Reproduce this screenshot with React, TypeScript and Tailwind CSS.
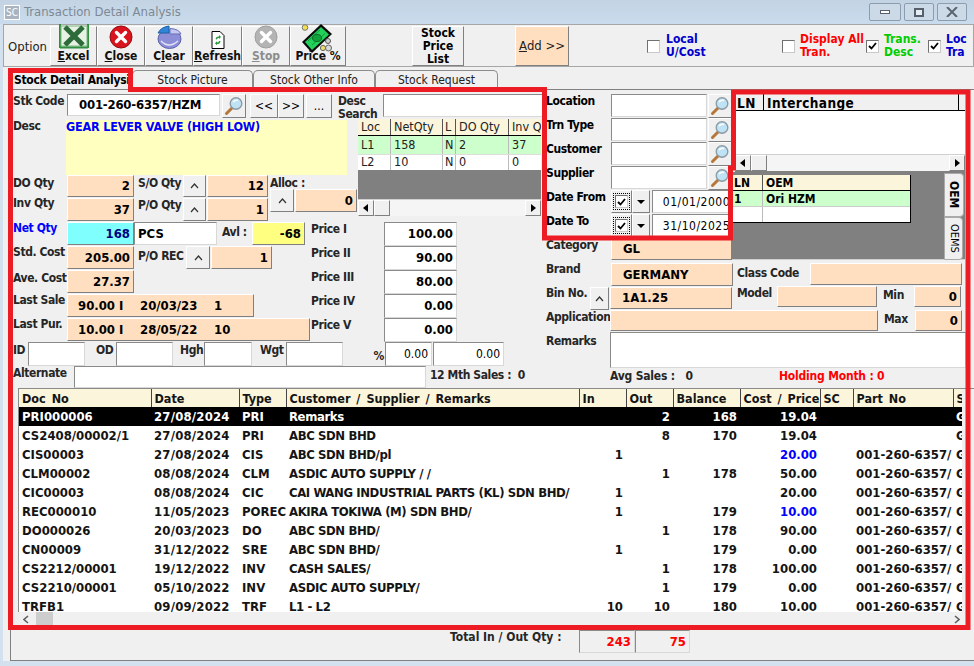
import type { ReactNode } from "react";

const raised = "border border-t-white border-l-white border-r-[#808080] border-b-[#808080]";
const sunken = "border border-t-[#8a8a8a] border-l-[#8a8a8a] border-r-[#d8d8d8] border-b-[#d8d8d8]";
const peach = "bg-[#ffdfc0]";

function SearchBtn() {
  return (
    <div className={`${raised} bg-[#f0f0f0] w-[24px] h-[24px] shrink-0 flex items-center justify-center`}>
      <svg width="20" height="20" viewBox="0 0 20 20">
        <path d="M8 12 L2.5 17.5" stroke="#b5763a" strokeWidth="3" strokeLinecap="round" />
        <circle cx="12" cy="7.5" r="5.8" fill="#bfe3f5" stroke="#8d9aa3" strokeWidth="1.4" />
        <path d="M9 6 Q11 3.6 14 4.4" stroke="#fff" strokeWidth="1.4" fill="none" />
      </svg>
    </div>
  );
}

function Caret({ className }: { className: string }) {
  return (
    <div className={`${raised} bg-[#f0f0f0] flex items-center justify-center text-[12px] ${className}`}>
      <svg width="9" height="6" viewBox="0 0 9 6"><path d="M1 5 L4.5 1 L8 5" fill="none" stroke="#333" strokeWidth="1.2" /></svg>
    </div>
  );
}

function Box({ className, children, right, sink }: { className: string; children?: ReactNode; right?: boolean; sink?: boolean }) {
  return (
    <div className={`${sink ? sunken : raised} shrink-0 flex items-center font-bold text-[13px] whitespace-nowrap overflow-hidden ${right ? "justify-end pr-[3px]" : "pl-[3px]"} ${className}`}>
      {children}
    </div>
  );
}

function Label({ className, children }: { className: string; children: ReactNode }) {
  return <div className={`shrink-0 font-bold text-[12px] leading-[14px] tracking-[-0.4px] text-[#262626] whitespace-nowrap ${className}`}>{children}</div>;
}

function Hbar({ className }: { className?: string }) {
  return (
    <div className={`h-[17px] flex bg-[#f5f5f5] border-t border-[#d0d0d0] ${className ?? ""}`}>
      <div className={`${raised} bg-[#f0f0f0] w-[16px] flex items-center justify-center`}>
        <svg width="6" height="8" viewBox="0 0 6 8"><path d="M5 0 L0 4 L5 8 Z" fill="#000" /></svg>
      </div>
      <div className={`${raised} bg-[#f0f0f0] w-[16px]`} />
      <div className="flex-1" />
      <div className={`${raised} bg-[#f0f0f0] w-[16px] flex items-center justify-center`}>
        <svg width="6" height="8" viewBox="0 0 6 8"><path d="M1 0 L6 4 L1 8 Z" fill="#000" /></svg>
      </div>
    </div>
  );
}

function ExcelIcon() {
  return (
    <svg width="30" height="25" viewBox="0 0 30 25">
      <path d="M1 0 V24 M29 0 V24" stroke="#2f8f3f" strokeWidth="2" />
      <rect x="2" y="2" width="26" height="20" fill="#e8f2e4" stroke="#7ab880" strokeWidth="1" />
      <path d="M6 3 L24 21 M24 3 L6 21" stroke="#2d6b3a" strokeWidth="5" />
      <path d="M1 23.5 H29" stroke="#2f8f3f" strokeWidth="2" />
    </svg>
  );
}

function CloseIcon({ stop }: { stop?: boolean }) {
  return (
    <svg width="24" height="24" viewBox="0 0 24 24">
      <circle cx="12" cy="12" r="11" fill={stop ? "#b4b4b4" : "#d9141c"} stroke={stop ? "#a0a0a0" : "#8f1015"} />
      <path d="M7.5 7.5 L16.5 16.5 M16.5 7.5 L7.5 16.5" stroke="#fff" strokeWidth="3.4" strokeLinecap="round" />
    </svg>
  );
}

function ClearIcon() {
  return (
    <svg width="26" height="24" viewBox="0 0 26 24">
      <ellipse cx="13.5" cy="14" rx="11.5" ry="9.5" fill="#8c8fd8" stroke="#5e62a8" />
      <path d="M2 8 Q5 2 13 1 L13 8 Z" fill="#2f86d8" stroke="#1d5ea6" />
      <path d="M14 9 H25 Q23 4 14 3.5 Z" fill="#c5c8ee" stroke="#6a6db8" />
      <path d="M5 16 Q13 24 22 16" stroke="#e4e4f7" strokeWidth="1.5" fill="none" />
    </svg>
  );
}

function RefreshIcon() {
  return (
    <svg width="14" height="18" viewBox="0 0 14 18">
      <path d="M1 .5 H9 L13 4.5 V17.5 H1 Z" fill="#fff" stroke="#000" />
      <path d="M4.5 8 Q5 5 8 5.5 L8 4 L10 6 L8 8 L8 6.8 Q6 6.8 6 8.5 Z" fill="#1f9a35" />
      <path d="M9.5 10 Q9 13.5 6 12.8 L6 14.3 L4 12.3 L6 10.3 L6 11.5 Q8 11.5 8 10 Z" fill="#1f9a35" />
    </svg>
  );
}

function PriceIcon() {
  return (
    <svg width="34" height="30" viewBox="0 0 34 30" className="-mb-[5px]">
      <circle cx="4" cy="3.5" r="2.8" fill="#f0e050" stroke="#777" />
      <path d="M1 18 L20 0 L31 10 L11 29 Z" fill="#0a0a0a" />
      <path d="M4 18 L20 3 L28 10.5 L11 26 Z" fill="#22d05a" />
      <path d="M7 17 L19 6 M11 21 L24 9.5" stroke="#0f9a3a" strokeWidth="1" />
      <ellipse cx="16" cy="14" rx="4.5" ry="3.5" fill="#12a03c" stroke="#0c6e2a" />
      <circle cx="27" cy="17" r="2.5" fill="#d0d0d0" stroke="#555" />
      <circle cx="22" cy="24" r="2.6" fill="#e8e070" stroke="#666" />
      <circle cx="27.5" cy="24" r="3" fill="#d8d8d8" stroke="#666" />
    </svg>
  );
}

function ToolBtn({ width, icon, label, gray }: { width: string; icon: ReactNode; label: ReactNode; gray?: boolean }) {
  return (
    <div className={`${raised} ${width} h-[40px] shrink-0 flex flex-col items-center justify-end pb-[2px] relative`}>
      <div className="h-[24px] flex items-end justify-center mb-[1px]">{icon}</div>
      <div className={`relative font-bold text-[12px] leading-[13px] ${gray ? "text-[#8c8c8c]" : "text-[#111]"}`}>{label}</div>
    </div>
  );
}

function CheckBox({ on }: { on?: boolean }) {
  return (
    <div className="w-[13px] h-[13px] shrink-0 bg-white border border-t-[#707070] border-l-[#707070] border-r-[#c8c8c8] border-b-[#c8c8c8] flex items-center justify-center">
      {on && <svg width="9" height="8" viewBox="0 0 9 8"><path d="M1 4 L3.5 6.5 L8 1" fill="none" stroke="#000" strokeWidth="1.8" /></svg>}
    </div>
  );
}

function Tab({ label, width }: { label: string; width: string }) {
  return (
    <div className={`${width} h-[19px] border border-b-0 border-[#8c8c8c] rounded-t-[5px] bg-[#f0f0f0] flex items-center justify-center text-[12px] text-[#222]`}>
      {label}
    </div>
  );
}

function DateRow({ label, value }: { label: string; value: string }) {
  return (
    <div className="flex h-[24px] items-start">
      <Label className="w-[65px] !text-black">{label}</Label>
      <div className={`${raised} w-[21px] h-[23px] flex items-center justify-center`}>
        <div className="border border-dotted border-black p-[1px]"><CheckBox on /></div>
      </div>
      <div className={`${raised} w-[18px] h-[23px] flex items-center justify-center`}>
        <svg width="8" height="4" viewBox="0 0 8 4"><path d="M0 0 H8 L4 4 Z" fill="#000" /></svg>
      </div>
      <div className={`${sunken} ml-[2px] w-[80px] h-[23px] bg-white flex items-center justify-end pr-[1px] text-[12px] tracking-[.5px]`}>{value}</div>
    </div>
  );
}

const columns = [
  { name: "Doc No", w: "w-[132px]" },
  { name: "Date", w: "w-[88px]" },
  { name: "Type", w: "w-[47px]" },
  { name: "Customer / Supplier / Remarks", w: "w-[293px]" },
  { name: "In", w: "w-[47px]" },
  { name: "Out", w: "w-[47px]" },
  { name: "Balance", w: "w-[67px]" },
  { name: "Cost / Price", w: "w-[80px]" },
  { name: "SC", w: "w-[33px]" },
  { name: "Part No", w: "w-[100px]" },
  { name: "S", w: "w-[60px]" },
];

const PN = "001-260-6357/";
const rows = [
  ["PRI000006", "27/08/2024", "PRI", "Remarks", "", "2", "168", "19.04", "", "", "G"],
  ["CS2408/00002/1", "27/08/2024", "PRI", "ABC SDN BHD", "", "8", "170", "19.04", "", "", "G"],
  ["CIS00003", "27/08/2024", "CIS", "ABC SDN BHD/pl", "1", "", "", "20.00", "", PN, "G"],
  ["CLM00002", "08/08/2024", "CLM", "ASDIC AUTO SUPPLY / /", "", "1", "178", "50.00", "", PN, "G"],
  ["CIC00003", "08/08/2024", "CIC", "CAI WANG INDUSTRIAL PARTS (KL) SDN BHD/", "1", "", "", "20.00", "", PN, "G"],
  ["REC000010", "11/05/2023", "POREC", "AKIRA TOKIWA (M) SDN BHD/", "1", "", "179", "10.00", "", PN, "G"],
  ["DO000026", "20/03/2023", "DO", "ABC SDN BHD/", "", "1", "178", "90.00", "", PN, "G"],
  ["CN00009", "31/12/2022", "SRE", "ABC SDN BHD/", "1", "", "179", "0.00", "", PN, "G"],
  ["CS2212/00001", "19/12/2022", "INV", "CASH SALES/", "", "1", "178", "100.00", "", PN, "G"],
  ["CS2210/00001", "05/10/2022", "INV", "ASDIC AUTO SUPPLY/", "", "1", "179", "0.00", "", PN, "G"],
  ["TRFB1", "09/09/2022", "TRF", "L1 - L2", "10", "10", "180", "10.00", "", PN, "G"],
];

const prices = [
  ["Price I", "100.00"],
  ["Price II", "90.00"],
  ["Price III", "80.00"],
  ["Price IV", "0.00"],
  ["Price V", "0.00"],
];

export default function App() {
  return (
    <div className="relative w-[974px] h-[666px] overflow-hidden bg-[#d3e1ef] text-[12px] text-black font-['DejaVu_Sans_Condensed','DejaVu_Sans',sans-serif]">
      {/* title bar */}
      <div className="h-[24px] flex items-center bg-gradient-to-b from-[#c3d3e3] to-[#c9dced] pl-[4px]">
        <div className="w-[16px] h-[15px] border border-white bg-[#a9b4c0] text-white text-[10px] leading-[13px] text-center">SC</div>
        <div className="ml-[4px] text-[13px] text-[#7e8894]">Transaction Detail Analysis</div>
        <div className="ml-auto mr-[7px] flex gap-[3px]">
          <div className="w-[32px] h-[18px] rounded-[2px] border border-[#8d9db0] bg-[#ccd9e6] flex items-center justify-center">
            <div className="w-[10px] h-[4px] border border-[#55606c] bg-white" />
          </div>
          <div className="w-[30px] h-[18px] rounded-[2px] border border-[#8d9db0] bg-[#ccd9e6] flex items-center justify-center">
            <div className="w-[10px] h-[9px] border-2 border-[#55606c] bg-[#e6edf4]" />
          </div>
          <div className="w-[30px] h-[18px] rounded-[2px] border border-[#8d9db0] bg-[#ccd9e6] flex items-center justify-center">
            <svg width="12" height="10" viewBox="0 0 12 10"><path d="M1 0 L11 10 M11 0 L1 10" stroke="#5a6570" strokeWidth="2" /></svg>
          </div>
        </div>
      </div>

      {/* toolbar */}
      <div className="ml-[3px] h-[43px] bg-[#f0f0f0] border border-[#a6a6a6] flex items-start pt-[1px]">
        <div className="w-[46px] pl-[4px] pt-[11px] text-[13px] text-[#222] shrink-0">Option</div>
        <ToolBtn width="w-[47px]" icon={<ExcelIcon />} label={<><u>E</u>xcel</>} />
        <ToolBtn width="w-[48px]" icon={<CloseIcon />} label={<><u>C</u>lose</>} />
        <ToolBtn width="w-[48px]" icon={<ClearIcon />} label={<>C<u>l</u>ear</>} />
        <ToolBtn width="w-[49px]" icon={<RefreshIcon />} label={<><u>R</u>efresh</>} />
        <ToolBtn width="w-[48px]" icon={<CloseIcon stop />} label={<><u>S</u>top</>} gray />
        <ToolBtn width="w-[56px]" icon={<PriceIcon />} label="Price %" />
        <div className="w-[66px] shrink-0" />
        <div className={`${raised} w-[52px] h-[40px] shrink-0 flex items-center justify-center text-center font-bold text-[12px] leading-[13px]`}>Stock<br />Price<br />List</div>
        <div className="w-[51px] shrink-0" />
        <div className={`${raised} ${peach} w-[54px] h-[40px] shrink-0 flex items-center justify-center text-[13px] text-[#222]`}><u>A</u>dd &gt;&gt;</div>
        <div className="w-[78px] shrink-0" />
        <div className="flex items-center gap-[6px] w-[135px] h-[40px] shrink-0 font-bold text-[#0000cc] leading-[13px]"><CheckBox /><div>Local<br />U/Cost</div></div>
        <div className="flex items-center gap-[5px] w-[84px] h-[40px] shrink-0 font-bold text-[#ff0000] leading-[13px]"><CheckBox /><div>Display All<br />Tran.</div></div>
        <div className="flex items-center gap-[5px] w-[62px] h-[40px] shrink-0 font-bold text-[#00cc00] leading-[13px]"><CheckBox on /><div>Trans.<br />Desc</div></div>
        <div className="flex items-center gap-[5px] h-[40px] shrink-0 font-bold text-[#0000cc] leading-[13px]"><CheckBox on /><div>Loc<br />Tra</div></div>
      </div>

      {/* main area */}
      <div className="ml-[3px] h-[594px] bg-[#f0f0f0] pl-[7px] pb-[5px]">
        <div className="h-[22px] flex items-end pl-[2px]">
          <div className="w-[120px] h-[20px] bg-[#f0f0f0] font-bold text-[12px] tracking-[-0.3px] pl-[2px] leading-[22px] whitespace-nowrap">Stock Detail Analysis</div>
          <Tab label="Stock Picture" width="w-[121px]" />
          <Tab label="Stock Other Info" width="w-[122px]" />
          <Tab label="Stock Request" width="w-[123px]" />
        </div>
        <div className="h-[572px] border-l border-b border-t border-[#808080]">
          <div className="flex">
            {/* left form */}
            <div className="w-[534px] shrink-0 pl-[2px] pt-[4px]">
              <div className="flex h-[25px] items-start">
                <Label className="w-[54px]">Stk Code</Label>
                <Box sink className="w-[153px] h-[22px] bg-white"><span className="pl-[8px] tracking-[-0.2px]">001-260-6357/HZM</span></Box>
                <div className="ml-[2px]"><SearchBtn /></div>
                <div className={`${raised} ml-[4px] w-[28px] h-[24px] flex items-center justify-center text-[12px]`}>&lt;&lt;</div>
                <div className={`${raised} w-[26px] h-[24px] flex items-center justify-center text-[12px]`}>&gt;&gt;</div>
                <div className={`${raised} ml-[2px] w-[26px] h-[24px] flex items-center justify-center text-[12px]`}>...</div>
                <Label className="ml-[6px] w-[45px] pt-[1px] !leading-[13px]">Desc<br />Search</Label>
                <div className={`${sunken} w-[160px] h-[23px] bg-white`} />
              </div>

              <div className="flex h-[103px]">
                <div className="w-[345px] shrink-0">
                  <div className="flex h-[56px] pt-[1px]">
                    <Label className="w-[53px] -mt-[1px]">Desc</Label>
                    <div className="w-[281px] h-[55px] bg-[#ffffc0] font-bold text-[12.5px] tracking-[-0.2px] leading-[14px] text-[#0000ff] whitespace-nowrap">GEAR LEVER VALVE (HIGH LOW)</div>
                  </div>
                  <div className="flex">
                    <div className="w-[255px] shrink-0">
                      <div className="flex h-[23px]">
                        <Label className="w-[54px] pt-[1px]">DO Qty</Label>
                        <Box right className={`w-[67px] h-[22px] ${peach}`}>2</Box>
                        <Label className="ml-[4px] w-[45px] pt-[1px]">S/O Qty</Label>
                        <Caret className="w-[23px] h-[22px]" />
                        <Box right className={`ml-[1px] w-[61px] h-[22px] ${peach}`}>12</Box>
                      </div>
                      <div className="flex h-[24px]">
                        <Label className="w-[54px] -mt-[2px]">Inv Qty</Label>
                        <Box right className={`w-[67px] h-[23px] ${peach}`}>37</Box>
                        <Label className="ml-[4px] w-[45px]">P/O Qty</Label>
                        <Caret className="w-[23px] h-[23px]" />
                        <Box right className={`ml-[1px] w-[61px] h-[23px] ${peach}`}>1</Box>
                      </div>
                    </div>
                    <div className="ml-[2px]">
                      <Label className="h-[14px] pt-[1px]">Alloc :</Label>
                      <div className="flex">
                        <Caret className="w-[24px] h-[23px]" />
                        <Box right className={`ml-[1px] w-[62px] h-[23px] ${peach}`}>0</Box>
                      </div>
                    </div>
                  </div>
                </div>
                <div className="w-[183px] h-[97px] shrink-0 bg-[#808080] flex flex-col text-[12.5px]">
                  <div className="flex h-[17px] bg-[#fbf5dc] border-b border-black text-[#222] leading-[16px]">
                    <div className="w-[33px] pl-[3px] border-r border-[#555]">Loc</div>
                    <div className="w-[52px] pl-[3px] border-r border-[#555]">NetQty</div>
                    <div className="w-[13px] pl-[2px] border-r border-[#555]">L</div>
                    <div className="w-[53px] pl-[3px] border-r border-[#555] whitespace-nowrap">DO Qty</div>
                    <div className="w-[32px] pl-[3px] overflow-hidden whitespace-nowrap">Inv Q</div>
                  </div>
                  <div className="flex h-[19px] bg-[#ccffcc] border-b border-[#ddd] leading-[18px] text-[#222]">
                    <div className="w-[33px] pl-[3px] border-r border-[#bbb]">L1</div>
                    <div className="w-[52px] pl-[3px] border-r border-[#bbb]">158</div>
                    <div className="w-[13px] pl-[2px] border-r border-[#bbb]">N</div>
                    <div className="w-[53px] pl-[3px] border-r border-[#bbb]">2</div>
                    <div className="w-[32px] pl-[3px]">37</div>
                  </div>
                  <div className="flex h-[15px] bg-white leading-[14px] text-[#222]">
                    <div className="w-[33px] pl-[3px] border-r border-[#bbb]">L2</div>
                    <div className="w-[52px] pl-[3px] border-r border-[#bbb]">10</div>
                    <div className="w-[13px] pl-[2px] border-r border-[#bbb]">N</div>
                    <div className="w-[53px] pl-[3px] border-r border-[#bbb]">0</div>
                    <div className="w-[32px] pl-[3px]">0</div>
                  </div>
                  <div className="flex-1" />
                  <Hbar />
                </div>
              </div>

              <div className="flex h-[120px]">
                <div className="w-[297px] shrink-0">
                  <div className="flex h-[24px]">
                    <Label className="w-[54px] -mt-[1px] !text-[#0000ff]">Net Qty</Label>
                    <Box right className="w-[67px] h-[23px] bg-[#80ffff] text-[#000080]">168</Box>
                    <Box sink className="w-[83px] h-[23px] bg-white">PCS</Box>
                    <Label className="ml-[5px] w-[30px] pt-[3px]">Avl :</Label>
                    <Box right className="w-[53px] h-[23px] bg-[#ffff80]">-68</Box>
                  </div>
                  <div className="flex h-[24px]">
                    <Label className="w-[54px] -mt-[1px]">Std. Cost</Label>
                    <Box right className={`w-[67px] h-[23px] ${peach}`}>205.00</Box>
                    <Label className="ml-[4px] w-[48px] pt-[3px]">P/O REC</Label>
                    <Caret className="w-[24px] h-[23px]" />
                    <Box right className={`ml-[1px] w-[61px] h-[23px] ${peach}`}>1</Box>
                  </div>
                  <div className="flex h-[24px]">
                    <Label className="w-[54px] pt-[1px]">Ave. Cost</Label>
                    <Box right className={`w-[67px] h-[23px] ${peach}`}>27.37</Box>
                  </div>
                  <div className="flex h-[24px]">
                    <Label className="w-[54px] -mt-[1px]">Last Sale</Label>
                    <Box className={`w-[187px] h-[23px] ${peach} !pl-[10px]`}><span className="w-[62px]">90.00 I</span><span className="w-[74px]">20/03/23</span><span>1</span></Box>
                  </div>
                  <div className="flex h-[24px]">
                    <Label className="w-[54px] -mt-[1px]">Last Pur.</Label>
                    <Box className={`w-[243px] h-[23px] ${peach} !pl-[10px]`}><span className="w-[62px]">10.00 I</span><span className="w-[74px]">28/05/22</span><span>10</span></Box>
                  </div>
                </div>
                <div className="w-[147px] shrink-0">
                  {prices.map(([name, val]) => (
                    <div key={name} className="flex h-[24px]">
                      <Label className="w-[74px] pl-[1px]">{name}</Label>
                      <Box sink right className="w-[73px] h-[24px] bg-white">{val}</Box>
                    </div>
                  ))}
                </div>
              </div>

              <div className="flex h-[24px] items-start">
                <Label className="w-[15px] pt-[1px]">ID</Label>
                <div className={`${sunken} w-[57px] h-[24px] bg-white`} />
                <Label className="w-[31px] pl-[11px] pt-[1px]">OD</Label>
                <div className={`${sunken} w-[57px] h-[24px] bg-white`} />
                <Label className="w-[31px] pl-[7px] pt-[1px]">Hgh</Label>
                <div className={`${sunken} w-[48px] h-[24px] bg-white`} />
                <Label className="w-[34px] pl-[8px] pt-[1px]">Wgt</Label>
                <div className={`${sunken} w-[57px] h-[24px] bg-white`} />
                <Label className="w-[42px] text-right pr-[1px] pt-[7px]">%</Label>
                <div className={`${sunken} w-[47px] h-[24px] bg-white flex items-center justify-end pr-[3px]`}>0.00</div>
                <div className={`${sunken} ml-[1px] w-[71px] h-[24px] bg-white flex items-center justify-end pr-[3px]`}>0.00</div>
              </div>

              <div className="flex h-[22px]">
                <Label className="w-[61px]">Alternate</Label>
                <div className={`${sunken} w-[352px] h-[22px] bg-white`} />
                <Label className="ml-[4px] pt-[2px]">12 Mth Sales :&nbsp; 0</Label>
              </div>
            </div>

            {/* right form */}
            <div className="w-[421px] shrink-0">
              <div className="flex">
                <div className="w-[187px] shrink-0 pl-[1px] pt-[4px]">
                  {["Location", "Trn Type", "Customer", "Supplier"].map((name) => (
                    <div key={name} className="flex h-[24px] items-start">
                      <Label className="w-[65px] !text-black">{name}</Label>
                      <div className={`${sunken} w-[97px] h-[23px] bg-white`} />
                      <div className="ml-[1px]"><SearchBtn /></div>
                    </div>
                  ))}
                  <DateRow label="Date From" value="01/01/2000" />
                  <DateRow label="Date To" value="31/10/2025" />
                  <div className="flex h-[25px]">
                    <Label className="w-[65px]">Category</Label>
                    <Box className={`w-[121px] h-[22px] ${peach}`}><span className="pl-[8px]">GL</span></Box>
                  </div>
                  <div className="flex h-[24px]">
                    <Label className="w-[65px] -mt-[1px]">Brand</Label>
                    <Box className={`w-[122px] h-[23px] ${peach}`}><span className="pl-[8px]">GERMANY</span></Box>
                  </div>
                  <div className="flex h-[23px]">
                    <Label className="w-[44px] -mt-[1px]">Bin No.</Label>
                    <Caret className="w-[20px] h-[23px]" />
                    <Box className={`ml-[1px] w-[122px] h-[22px] ${peach}`}><span className="pl-[8px]">1A1.25</span></Box>
                  </div>
                </div>
                <div className="w-[233px] shrink-0">
                  <div className="ml-[3px] mt-[4px] w-[230px] h-[78px] bg-white border-b border-[#808080] flex flex-col">
                    <div className="flex h-[17px] bg-[#f0f0f0] border-b border-black font-bold text-[13.5px] tracking-[.4px] leading-[19px]">
                      <div className="w-[29px] pl-[2px] border-r border-black">LN</div>
                      <div className="w-[195px] pl-[3px] border-r border-black">Interchange</div>
                    </div>
                    <div className="flex-1" />
                    <Hbar />
                  </div>
                  <div className="h-[87px] bg-[#808080] flex justify-between">
                    <div className="w-[179px] h-[48px] mt-[3px] bg-white border-r border-b border-black font-bold">
                      <div className="flex h-[16px] bg-[#fbf5dc] border-b border-black leading-[17px]">
                        <div className="w-[31px] pl-[2px] border-r border-[#555]">LN</div>
                        <div className="pl-[3px]">OEM</div>
                      </div>
                      <div className="flex h-[16px] bg-[#ccffcc] border-b border-[#ccc] leading-[17px]">
                        <div className="w-[31px] pl-[2px] border-r border-[#bbb]">1</div>
                        <div className="pl-[3px]">Ori HZM</div>
                      </div>
                      <div className="flex h-[15px]"><div className="w-[31px] border-r border-[#bbb]" /></div>
                    </div>
                    <div className="w-[20px] mr-[1px] mt-[1px]">
                      <div className="h-[44px] bg-[#f0f0f0] border border-[#aaa] rounded-r-[4px] flex items-center justify-center [writing-mode:vertical-rl] font-bold text-[12px]">OEM</div>
                      <div className="h-[43px] bg-[#f0f0f0] border border-[#aaa] rounded-r-[4px] flex items-center justify-center [writing-mode:vertical-rl] text-[11px]">OEMS</div>
                    </div>
                  </div>
                  <div className="h-[27px] flex items-end pl-[5px] border-t border-[#cfcfcf]">
                    <Label className="w-[73px] self-start pt-[6px]">Class Code</Label>
                    <Box className={`w-[152px] h-[22px] mb-[1px] ${peach}`} />
                  </div>
                  <div className="flex h-[22px]">
                    <Label className="w-[45px] pl-[5px]">Model</Label>
                    <Box className={`w-[100px] h-[21px] ${peach}`} />
                    <Label className="w-[37px] pl-[6px] pt-[2px]">Min</Label>
                    <Box right className={`w-[47px] h-[21px] ${peach}`}>0</Box>
                  </div>
                </div>
              </div>
              <div className="flex h-[22px] pl-[1px]">
                <Label className="w-[64px]">Application</Label>
                <Box className={`w-[268px] h-[21px] ${peach}`} />
                <Label className="w-[37px] pl-[6px] pt-[2px]">Max</Label>
                <Box right className={`w-[47px] h-[21px] ${peach}`}>0</Box>
              </div>
              <div className="flex h-[36px] pl-[1px]">
                <Label className="w-[64px] pt-[2px]">Remarks</Label>
                <div className={`${sunken} w-[356px] h-[36px] bg-white`} />
              </div>
              <div className="flex h-[17px] pl-[64px] font-bold leading-[14px] pt-[1px] tracking-[-0.2px]">
                <div className="w-[170px] pl-[1px] text-[#262626]">Avg Sales :&nbsp;&nbsp; 0</div>
                <div className="text-[#ff0000]">Holding Month : 0</div>
              </div>
            </div>
          </div>

          {/* transaction grid */}
          <div className="ml-[7px] h-[224px] flex border-t border-l border-[#8a8a8a]">
            <div className="w-[943px] overflow-hidden bg-white shrink-0">
              <table className="table-fixed w-[994px] border-collapse font-bold text-[13px] text-[#141414]">
                <thead>
                  <tr className="h-[18px] bg-[#fbf5dc]">
                    {columns.map((c) => (
                      <th key={c.name} className={`${c.w} p-0 pl-[3px] text-left font-bold text-[12.5px] [word-spacing:2px] leading-[17px] border-r border-[#444] whitespace-nowrap overflow-hidden`}>{c.name}</th>
                    ))}
                  </tr>
                </thead>
                <tbody>
                  {rows.map((r, i) => (
                    <tr key={r[0]} className={i === 0 ? "bg-black text-white h-[19px]" : "h-[19px]"}>
                      {r.map((v, j) => {
                        const num = j >= 4 && j <= 7;
                        const blue = j === 7 && (i === 2 || i === 5);
                        return (
                          <td key={j} className={`p-0 leading-[18px] whitespace-nowrap overflow-hidden ${num ? "text-right pr-[3px]" : "pl-[3px]"} ${j === 3 ? "tracking-[-0.4px]" : ""} ${j === 1 ? "tracking-[.2px]" : ""} ${blue ? "text-[#0000ff]" : ""}`}>{v}</td>
                        );
                      })}
                    </tr>
                  ))}
                </tbody>
              </table>
            </div>
            <div className="flex-1 bg-[#f0f0f0]" />
          </div>
          <div className="ml-[7px] h-[15px] bg-[#f0f0f0] flex items-center">
            <svg className="ml-[5px]" width="6" height="9" viewBox="0 0 6 9"><path d="M5 1 L1 4.5 L5 8" fill="none" stroke="#606060" strokeWidth="1.6" /></svg>
            <div className="ml-[7px] w-[17px] h-[15px] bg-[#cdcdcd]" />
            <div className="flex-1" />
            <svg className="mr-[14px]" width="6" height="9" viewBox="0 0 6 9"><path d="M1 1 L5 4.5 L1 8" fill="none" stroke="#606060" strokeWidth="1.6" /></svg>
          </div>

          {/* totals */}
          <div className="flex h-[30px] pt-[3px] pl-[439px]">
            <Label className="w-[129px] !tracking-normal">Total In / Out Qty :</Label>
            <Box sink right className="w-[56px] h-[23px] text-[#ff0000]">243</Box>
            <Box sink right className="w-[55px] h-[23px] text-[#ff0000]">75</Box>
          </div>
        </div>
      </div>

      {/* red annotation drawn over the screenshot */}
      <svg className="absolute inset-0 pointer-events-none" width="974" height="666" viewBox="0 0 974 666">
        <path
          d="M10.5 70.5 H130.5 V89.5 H544.5 V238 H730.5 V168 H733.5 V92 H968 V627.5 H10.5 Z"
          fill="none"
          stroke="#ed1c24"
          strokeWidth="5"
        />
      </svg>
    </div>
  );
}
